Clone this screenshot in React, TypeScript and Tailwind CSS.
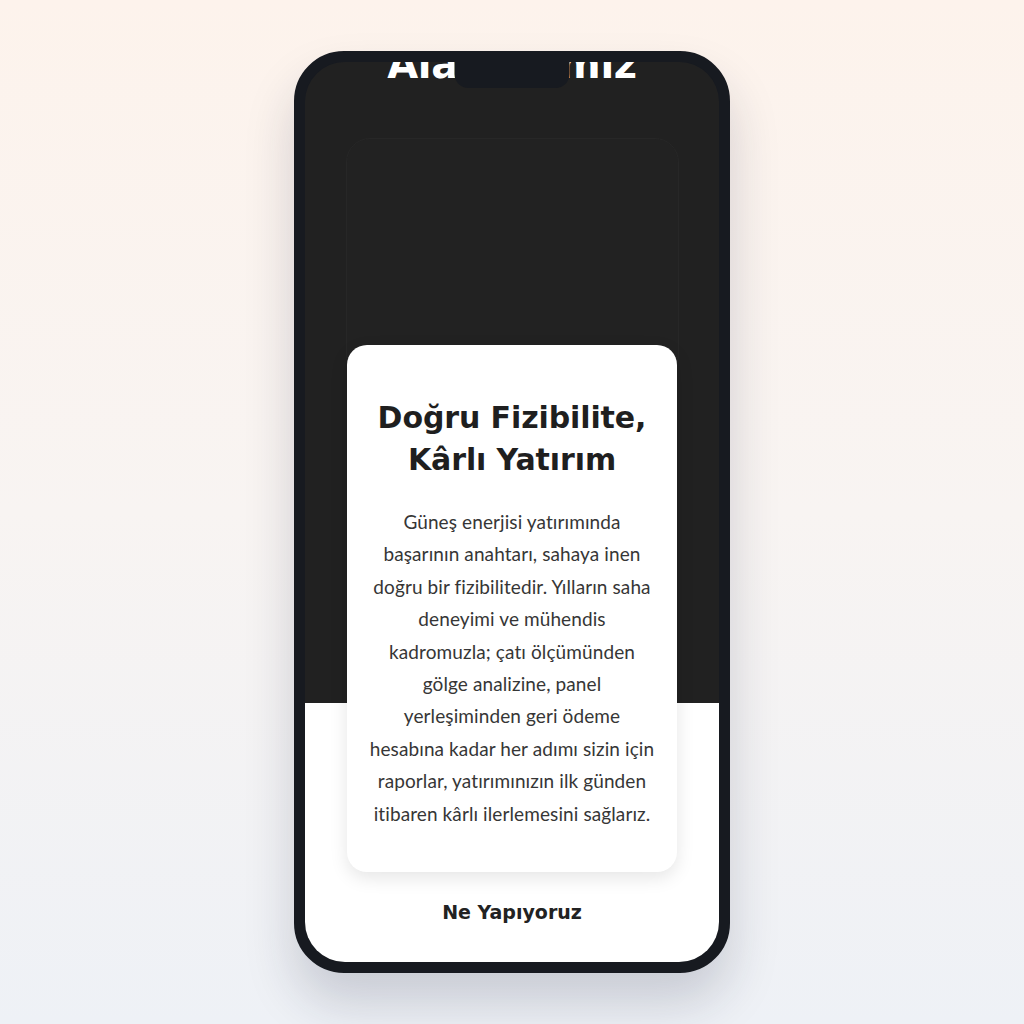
const bodyLines = [
  'Güneş enerjisi yatırımında',
  'başarının anahtarı, sahaya inen',
  'doğru bir fizibilitedir. Yılların saha',
  'deneyimi ve mühendis',
  'kadromuzla; çatı ölçümünden',
  'gölge analizine, panel',
  'yerleşiminden geri ödeme',
  'hesabına kadar her adımı sizin için',
  'raporlar, yatırımınızın ilk günden',
  'itibaren kârlı ilerlemesini sağlarız.',
];

function Notch() {
  return <div className="absolute left-1/2 top-0 z-20 h-[26px] w-[115px] -translate-x-1/2 rounded-b-[14px] bg-[#171a20]" />;
}

function FeatureCard() {
  return (
    <div className="mt-[50px]">
      <div className="mx-auto h-[240px] w-[333px] rounded-[24px] border border-[#272727] bg-[#222222]" />
      <div className="relative z-10 mx-auto -mt-[33px] w-[330px] rounded-[20px] bg-white px-4 pb-[42px] pt-[52px] text-center shadow-[0_6px_18px_rgba(0,0,0,0.10)]">
        <h3 className="font-['DejaVu_Sans','Inter',sans-serif] text-[30px] font-bold leading-[42px] tracking-[-0.1px] text-[#1f1f1f]">
          Doğru Fizibilite,
          <br />
          Kârlı Yatırım
        </h3>
        <p className="mt-[25px] font-['Lato','Open_Sans',sans-serif] text-[19px] leading-[32.4px] tracking-[0.1px] text-[#363636]">
          {bodyLines.map((l) => (
            <span key={l} className="block">
              {l}
            </span>
          ))}
        </p>
      </div>
    </div>
  );
}

export default function App() {
  return (
    <div className="flex h-[1024px] w-full items-center justify-center bg-[linear-gradient(to_bottom,#fdf3ec,#f8f4f2_50%,#eef1f6)]">
      <div className="h-[922px] w-[436px] rounded-[50px] border-[11px] border-[#171a20] bg-[#171a20] shadow-[0_30px_50px_rgba(30,35,60,0.18)]">
        <div className="relative h-full w-full overflow-hidden rounded-[40px] bg-[linear-gradient(to_bottom,#212121_641px,#ffffff_641px)]">
          <Notch />
          <h2 className="-mt-[22px] text-center font-['DejaVu_Sans','Inter',sans-serif] text-[40px] font-bold leading-[48px] tracking-[-0.3px] text-white">
            Alanlarımız
          </h2>
          <FeatureCard />
          <div className="mt-[28px] text-center font-['DejaVu_Sans','Inter',sans-serif] text-[19px] font-bold leading-[24px] text-[#222222]">
            Ne Yapıyoruz
          </div>
        </div>
      </div>
    </div>
  );
}
